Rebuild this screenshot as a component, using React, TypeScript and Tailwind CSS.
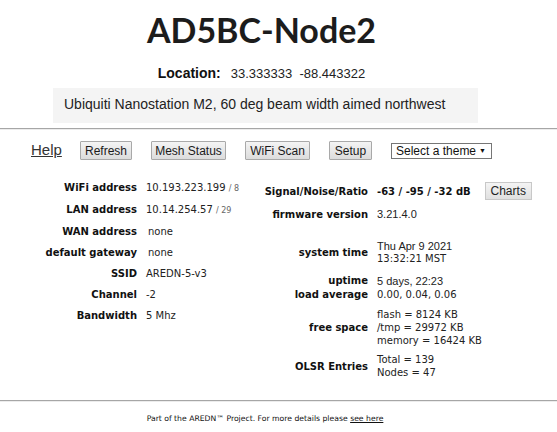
const verdana = "font-['DejaVu_Sans',Verdana,sans-serif]";
const arial = "font-['Liberation_Sans',Arial,sans-serif]";

function Btn({ label, w }: { label: string; w: string }) {
  return (
    <button
      className={`${w} h-[19px] shrink-0 whitespace-nowrap border border-[#a9a9a9] bg-gradient-to-b from-[#f4f4f4] to-[#dcdcdc] text-[12px] leading-none text-[#1a1a1a] rounded-[1px]`}
    >
      {label}
    </button>
  );
}

function Hr() {
  return <div className="w-full border-t border-t-[#a6a6a6] border-b border-b-[#ececec]" />;
}

export default function App() {
  return (
    <div className={`w-[557px] h-[432px] bg-white text-[#111] ${arial} overflow-hidden`}>
      {/* header */}
      <div className="w-[523px]">
        <h1 className="pt-[13px] text-center text-[34px] leading-none font-bold font-['Lato',sans-serif] text-[#1c1c1c]">
          AD5BC-Node2
        </h1>
        <div className="mt-[19px] text-center leading-[14px] whitespace-nowrap">
          <span className="text-[14px] font-bold">Location:</span>
          <span className="text-[13px] text-[#222] ml-[10px]">33.333333&nbsp; -88.443322</span>
        </div>
      </div>
      <div className="mt-[7px] ml-[53px] w-[425px] h-[35px] bg-[#f4f4f4] flex items-center pl-[11px] pb-[3px] text-[14px] text-[#222]">
        Ubiquiti Nanostation M2, 60 deg beam width aimed northwest
      </div>

      <div className="mt-[5px]">
        <Hr />
      </div>

      {/* nav */}
      <div className="mt-[11px] flex items-center gap-[19px] pl-[31px] h-[19px]">
        <a href="#" className="text-[15px] underline text-[#333] w-[30px]">
          Help
        </a>
        <Btn label="Refresh" w="w-[52px]" />
        <Btn label="Mesh Status" w="w-[75px]" />
        <Btn label="WiFi Scan" w="w-[65px]" />
        <Btn label="Setup" w="w-[43px]" />
        <div className="w-[101px] h-[16px] shrink-0 whitespace-nowrap border border-[#767676] bg-white flex items-center justify-between pl-[4px] pr-[5px] text-[12px] leading-none text-[#111]">
          <span>Select a theme</span>
          <span className="text-[7px]">▼</span>
        </div>
      </div>

      {/* status tables */}
      <div className="mt-[22px] flex items-start">
        <div className={`ml-[37px] w-[211px] grid grid-cols-[100px_auto] content-start gap-x-[9px] gap-y-[9px] text-[10px] leading-[12px] whitespace-nowrap ${verdana}`}>
          <span className="text-right font-bold">WiFi address</span>
          <span className="text-[#222]">
            10.193.223.199 <span className="text-[8px] text-[#666]">/ 8</span>
          </span>
          <span className="text-right font-bold">LAN address</span>
          <span className="text-[#222]">
            10.14.254.57 <span className="text-[8px] text-[#666]">/ 29</span>
          </span>
          <span className="text-right font-bold">WAN address</span>
          <span className="text-[#222] pl-[2px]">none</span>
          <span className="text-right font-bold">default gateway</span>
          <span className="text-[#222] pl-[2px]">none</span>
          <span className="text-right font-bold">SSID</span>
          <span className="text-[#222]">AREDN-5-v3</span>
          <span className="text-right font-bold">Channel</span>
          <span className="text-[#222]">-2</span>
          <span className="text-right font-bold">Bandwidth</span>
          <span className="text-[#222]">5 Mhz</span>
        </div>

        <div className={`w-[300px] grid grid-cols-[120px_auto] content-start gap-x-[9px] items-center text-[10px] leading-[13px] whitespace-nowrap ${verdana}`}>
          <span className="text-right font-bold">Signal/Noise/Ratio</span>
          <div className="flex items-center">
            <span className="font-bold">-63 / -95 / -32 dB</span>
            <button className={`ml-[14px] w-[47px] h-[18px] border border-[#c8c8c8] bg-gradient-to-b from-[#f4f4f4] to-[#e0e0e0] text-[12px] leading-none text-[#222] ${arial}`}>
              Charts
            </button>
          </div>

          <span className="mt-[8px] text-right font-bold">firmware version</span>
          <span className={`mt-[8px] text-[11px] ${arial} text-[#222]`}>3.21.4.0</span>

          <span className="mt-[19px] text-right font-bold">system time</span>
          <div className="mt-[19px] text-[#222]">
            <div className={`text-[11px] leading-[12px] ${arial}`}>Thu Apr 9 2021</div>
            <div>13:32:21 MST</div>
          </div>

          <div className="mt-[9px] text-right font-bold leading-[14px]">
            <div>uptime</div>
            <div>load average</div>
          </div>
          <div className="mt-[9px] text-[#222] leading-[14px]">
            <div className={`text-[11px] ${arial}`}>5 days, 22:23</div>
            <div>0.00, 0.04, 0.06</div>
          </div>

          <span className="mt-[6px] text-right font-bold">free space</span>
          <div className="mt-[6px] text-[#222]">
            <div>flash = 8124 KB</div>
            <div>/tmp = 29972 KB</div>
            <div>memory = 16424 KB</div>
          </div>

          <span className="mt-[6px] text-right font-bold">OLSR Entries</span>
          <div className="mt-[6px] text-[#222]">
            <div>Total = 139</div>
            <div>Nodes = 47</div>
          </div>
        </div>
      </div>

      <div className="mt-[21px]">
        <Hr />
      </div>

      <div className={`w-[530px] mt-[12px] text-center text-[7.7px] leading-[10px] text-[#111] ${verdana}`}>
        Part of the AREDN™ Project. For more details please{" "}
        <a href="#" className="underline">
          see here
        </a>
      </div>
    </div>
  );
}
